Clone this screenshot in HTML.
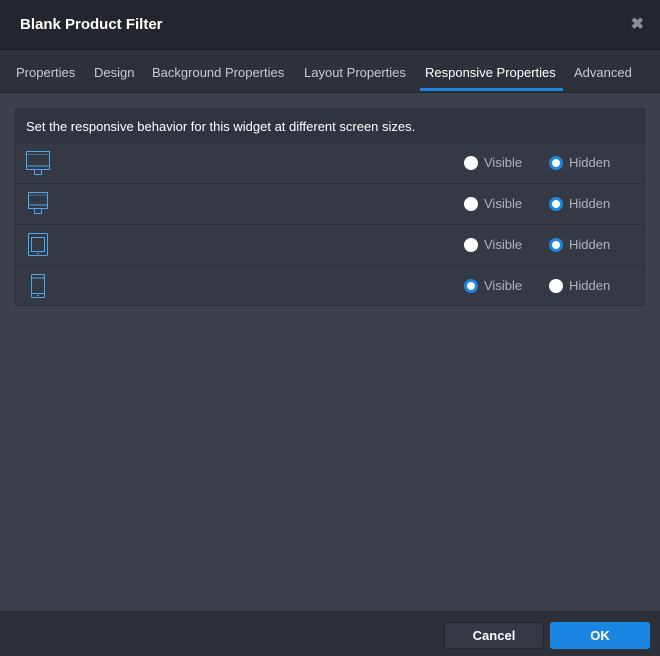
<!DOCTYPE html>
<html><head><style>
*{box-sizing:border-box;margin:0;padding:0}
body{width:660px;height:656px;background:#3b404b;font-family:"Liberation Sans",sans-serif;position:relative;overflow:hidden;border-radius:6px}
.hdr{position:absolute;left:0;top:0;width:660px;height:50px;background:#23262e;border-bottom:1px solid #1b1d23}
.hdr h1{position:absolute;left:20px;top:16px;font-size:15px;font-weight:bold;color:#fff}
.x{position:absolute;right:16px;top:14px;color:#8a8d94;font-size:16px;font-weight:bold}
.tabs{position:absolute;left:0;top:50px;width:660px;height:43px;background:#2d313a;border-bottom:1px solid #23262d}
.tab{position:absolute;top:15px;font-size:13px;color:#c7cad0}
.tab.a{color:#fff}
.ul{position:absolute;left:420px;top:88px;width:143px;height:3px;background:#1a86e2}
.panel{position:absolute;left:15px;top:108px;width:630px;height:198px;background:#343944;border:1px solid #2c3039}
.ph{height:33px;background:#30343e;color:#fff;font-size:13px;padding:10px 0 0 10px}
.row{height:41px;border-top:1px solid #2c3039;position:relative}
.ic{position:absolute;left:9px;top:8px}
.r{position:absolute;top:13px;width:14px;height:14px;border-radius:50%;background:#fff}
.r.on{border:3px solid #1a86e2}
.lb{position:absolute;top:12px;font-size:13px;color:#aeb3bc}
.ftr{position:absolute;left:0;top:611px;width:660px;height:45px;background:#2d3039;border-top:1px solid #25282f}
.btn{position:absolute;top:10px;height:27px;border-radius:3px;font-size:13px;font-weight:bold;color:#fff;text-align:center;line-height:25px}
</style></head><body>
<div class="hdr"><h1>Blank Product Filter</h1><div class="x">✖</div></div>
<div class="tabs">
<span class="tab" style="left:16px">Properties</span>
<span class="tab" style="left:94px">Design</span>
<span class="tab" style="left:152px">Background Properties</span>
<span class="tab" style="left:304px">Layout Properties</span>
<span class="tab a" style="left:425px">Responsive Properties</span>
<span class="tab" style="left:574px">Advanced</span>
</div>
<div class="ul"></div>
<div class="panel">
<div class="ph">Set the responsive behavior for this widget at different screen sizes.</div>
<div class="row"><svg class="ic" width="26" height="24" viewBox="0 0 26 24" fill="none" stroke="#4aa8f0" stroke-width="1"><rect x="1.5" y="0.5" width="23" height="18"/><line x1="1.5" y1="3.5" x2="24.5" y2="3.5" stroke-opacity=".5"/><line x1="1.5" y1="15" x2="24.5" y2="15"/><rect x="9.5" y="18.5" width="7" height="5"/></svg>
<div class="r" style="left:448px"></div><span class="lb" style="left:468px">Visible</span><div class="r on" style="left:533px"></div><span class="lb" style="left:553px">Hidden</span></div>
<div class="row"><svg class="ic" width="26" height="24" viewBox="0 0 26 24" fill="none" stroke="#4aa8f0"><rect x="3.5" y="0.5" width="19" height="16"/><line x1="3.5" y1="3" x2="22.5" y2="3" stroke-opacity=".5"/><line x1="3.5" y1="13" x2="22.5" y2="13"/><rect x="9.5" y="16.5" width="7" height="5"/></svg>
<div class="r" style="left:448px"></div><span class="lb" style="left:468px">Visible</span><div class="r on" style="left:533px"></div><span class="lb" style="left:553px">Hidden</span></div>
<div class="row"><svg class="ic" width="26" height="24" viewBox="0 0 26 24" fill="none" stroke="#4aa8f0"><rect x="3.5" y="0.5" width="19" height="22" rx="1"/><rect x="6.5" y="4.5" width="13" height="14"/><line x1="12" y1="20.5" x2="14" y2="20.5"/></svg>
<div class="r" style="left:448px"></div><span class="lb" style="left:468px">Visible</span><div class="r on" style="left:533px"></div><span class="lb" style="left:553px">Hidden</span></div>
<div class="row"><svg class="ic" width="26" height="24" viewBox="0 0 26 24" fill="none" stroke="#4aa8f0"><rect x="6.5" y="0.5" width="13" height="23" rx="1"/><line x1="6.5" y1="4" x2="19.5" y2="4"/><line x1="6.5" y1="19.5" x2="19.5" y2="19.5"/><line x1="12" y1="21.5" x2="14" y2="21.5"/></svg>
<div class="r on" style="left:448px"></div><span class="lb" style="left:468px">Visible</span><div class="r" style="left:533px"></div><span class="lb" style="left:553px">Hidden</span></div>
</div>
<div class="ftr">
<div class="btn" style="left:444px;width:100px;background:#353943;border:1px solid #23262d">Cancel</div>
<div class="btn" style="left:550px;width:100px;background:#1a86e2;line-height:27px">OK</div>
</div>
</body></html>
